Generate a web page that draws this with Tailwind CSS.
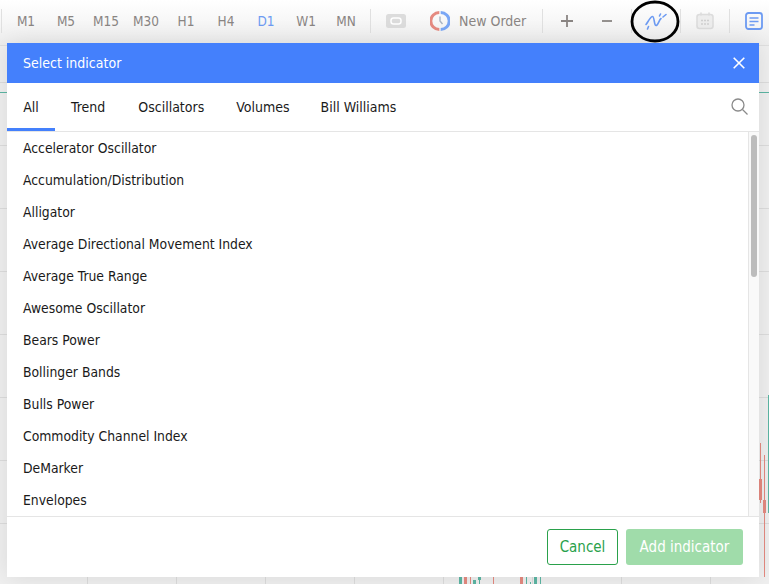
<!DOCTYPE html>
<html>
<head>
    <title>Select indicator</title>
    <script src="https://cdn.jsdelivr.net/npm/@tailwindcss/browser@4"></script>
</head>
<body class="w-[769px] h-[584px] overflow-hidden bg-[#f0f0f0] font-['DejaVu_Sans_Condensed','DejaVu_Sans',sans-serif]">
    <div class="relative w-[769px] h-[584px] overflow-hidden">
        <!-- toolbar -->
        <div class="h-[46px] flex items-start pt-[9px] border-b border-[#e0e0e0] bg-gradient-to-b from-white to-[#eeeeee] text-[14px] text-[#8a8583]">
            <div class="w-px h-6 ml-px bg-[#e0e0e0] mr-1"></div>
            <div class="flex w-[364px] h-6 items-center text-center text-[13.5px]">
                <span class="w-10">M1</span><span class="w-10">M5</span><span class="w-10">M15</span><span class="w-10">M30</span><span class="w-10">H1</span><span class="w-10">H4</span><span class="w-10 text-[#6d9bf2]">D1</span><span class="w-10">W1</span><span class="w-10">MN</span>
            </div>
            <div class="w-px h-6 bg-[#e0e0e0]"></div>
            <div class="w-[49px] h-6 flex items-center justify-center">
                <svg class="w-5 h-[14px]" viewBox="0 0 20 14"><rect width="20" height="14" rx="2.500" fill="#dcdcdc"/><rect x="5" y="4" width="10" height="6" rx="2.500" fill="none" stroke="#fff" stroke-width="1.500"/></svg>
            </div>
            <div class="h-6 flex items-center gap-[9px] w-[122px] pl-[10px]">
                <svg class="w-5 h-5 shrink-0" viewBox="0 0 20 20"><path d="M9.300 1.500a8.500 8.500 0 0 0 0 17" fill="none" stroke="#e58a80" stroke-width="3"/><path d="M10.700 1.500a8.500 8.500 0 0 1 0 17" fill="none" stroke="#7aa7f5" stroke-width="3"/><path d="M10 5.500v4.500l2.500 3" fill="none" stroke="#a9b4c2" stroke-width="1.400"/></svg>
                <span class="whitespace-nowrap">New Order</span>
            </div>
            <div class="w-px h-6 bg-[#e0e0e0]"></div>
            <div class="w-[48px] h-6 flex items-center justify-center">
                <svg class="w-3 h-3" viewBox="0 0 12 12"><path d="M6 0v12M0 6h12" stroke="#8a8583" stroke-width="1.800"/></svg>
            </div>
            <div class="w-[32px] h-6 flex items-center justify-center">
                <svg class="w-3 h-3" viewBox="0 0 12 12"><path d="M1 6h10" stroke="#8a8583" stroke-width="1.800"/></svg>
            </div>
            <div class="w-px h-6 ml-2 bg-[#e0e0e0]"></div>
            <div class="w-[47px] h-6 flex items-center justify-center mr-px">
                <svg class="w-[22px] h-[20px]" viewBox="0 0 22 20" fill="none" stroke="#6d9bf2" stroke-width="1.600" stroke-linecap="round"><path d="M1 13.500C3 11 5.500 5.500 7.500 5.500S9 14.500 11 14.500 14 9 16 7.500"/><path d="M2.500 18l1-2.500M14.500 5l1-2M18 6l3-2.500"/></svg>
            </div>
            <div class="w-px h-6 bg-[#e0e0e0]"></div>
            <div class="w-[48px] h-6 flex items-center justify-center">
                <svg class="w-[18px] h-[18px]" viewBox="0 0 18 18"><rect x="1" y="2.500" width="16" height="14" rx="2.500" fill="#ededed" stroke="#dcdcdc" stroke-width="1.600"/><path d="M5 0.500v3M13 0.500v3" stroke="#dcdcdc" stroke-width="1.600"/><path d="M5 8.500h2M8 8.500h2M11 8.500h2M5 12h2M8 12h2M11 12h2" stroke="#cfcfcf" stroke-width="1.300"/></svg>
            </div>
            <div class="w-px h-6 bg-[#e0e0e0]"></div>
            <div class="w-[39px] h-6 flex items-center pl-[15px]">
                <svg class="w-[18px] h-[18px] shrink-0" viewBox="0 0 18 18" fill="none" stroke="#6d9bf2"><rect x="1" y="1" width="16" height="16" rx="2.500" stroke-width="1.800"/><path d="M4.500 6h9M4.500 9.500h9M4.500 13h5" stroke-width="1.700"/></svg>
            </div>
        </div>

        <!-- dimmed chart behind the dialog -->
        <div class="relative h-[538px] bg-[image:linear-gradient(#dddddd_1px,transparent_1px),linear-gradient(90deg,#dcdcdc_1px,transparent_1px)] bg-[size:100%_63px,89px_100%] bg-[position:0_36px,87px_0]">
            <div class="absolute left-0 top-[46px] w-full h-px bg-[#5cb6a4]"></div>
            <div class="absolute left-[768px] top-[349px] w-px h-[118px] bg-[#5cb6a4]"></div>
            <div class="absolute left-[760px] top-[397px] w-px h-[60px] bg-[#e58a80]"></div>
            <div class="absolute left-[759px] top-[433px] w-[3px] h-[21px] bg-[#e58a80]"></div>
            <div class="absolute left-[764px] top-[409px] w-px h-[122px] bg-[#e58a80]"></div>
            <div class="absolute left-[763px] top-[454px] w-[3px] h-[13px] bg-[#e58a80]"></div>
            <div class="absolute left-[459px] top-[531px] w-[3px] h-[7px] bg-[#5cb6a4]"></div>
            <div class="absolute left-[464px] top-[531px] w-[3px] h-[7px] bg-[#e58a80]"></div>
            <div class="absolute left-[470px] top-[531px] w-px h-[7px] bg-[#e58a80]"></div>
            <div class="absolute left-[473px] top-[534px] w-[3px] h-1 bg-[#5cb6a4]"></div>
            <div class="absolute left-[478px] top-[531px] w-[3px] h-[3px] bg-[#5cb6a4]"></div>
            <div class="absolute left-[479px] top-[531px] w-px h-[7px] bg-[#5cb6a4]"></div>
            <div class="absolute left-[493px] top-[531px] w-px h-[7px] bg-[#e58a80]"></div>
            <div class="absolute left-[520px] top-[531px] w-[3px] h-[7px] bg-[#e58a80]"></div>
            <div class="absolute left-[526px] top-[531px] w-px h-[7px] bg-[#5cb6a4]"></div>
            <div class="absolute left-[530px] top-[536px] w-px h-[2px] bg-[#5cb6a4]"></div>
            <div class="absolute left-[534px] top-[531px] w-[3px] h-[7px] bg-[#5cb6a4]"></div>
            <div class="absolute left-[540px] top-[531px] w-px h-[7px] bg-[#5cb6a4]"></div>
        </div>

        <!-- dialog -->
        <div class="absolute left-[7px] top-[43px] w-[752px] h-[534px] bg-white flex flex-col shadow-[0_0_24px_rgba(0,0,0,0.1)]">
            <div class="h-10 bg-[#4480fc] text-white text-[14px] flex items-center justify-between pl-4 pr-[14px]">
                <span>Select indicator</span>
                <svg class="w-[12px] h-[12px]" viewBox="0 0 12 12"><path d="M.7.7l10.600 10.600M11.300.7L.7 11.300" stroke="#fff" stroke-width="1.600"/></svg>
            </div>
            <div class="h-[49px] border-b border-[#e5e5e5] flex items-stretch text-[14px] text-[#1a1a1a] relative">
                <div class="w-12 flex items-center justify-center border-b-[3px] pt-[3px] border-[#4480fc] h-[48px]">All</div>
                <div class="pl-4 pr-[17px] flex items-center">Trend</div>
                <div class="px-4 flex items-center">Oscillators</div>
                <div class="pl-4 pr-[15px] flex items-center">Volumes</div>
                <div class="px-4 flex items-center">Bill Williams</div>
                <svg class="absolute right-[11px] top-[15px] w-[17px] h-[17px]" viewBox="0 0 17 17" fill="none" stroke="#8a8a8a" stroke-width="1.300"><circle cx="7" cy="7" r="6"/><path d="M11.500 11.500l5 5"/></svg>
            </div>
            <div class="h-[384px] flex overflow-hidden border-b border-[#e5e5e5] box-content">
                <ul class="flex-1 text-[13.8px] text-[#1a1a1a] pl-4 border-r border-[#e5e5e5]">
                    <li class="h-8 flex items-center">Accelerator Oscillator</li>
                    <li class="h-8 flex items-center">Accumulation/Distribution</li>
                    <li class="h-8 flex items-center">Alligator</li>
                    <li class="h-8 flex items-center">Average Directional Movement Index</li>
                    <li class="h-8 flex items-center">Average True Range</li>
                    <li class="h-8 flex items-center">Awesome Oscillator</li>
                    <li class="h-8 flex items-center">Bears Power</li>
                    <li class="h-8 flex items-center">Bollinger Bands</li>
                    <li class="h-8 flex items-center">Bulls Power</li>
                    <li class="h-8 flex items-center">Commodity Channel Index</li>
                    <li class="h-8 flex items-center">DeMarker</li>
                    <li class="h-8 flex items-center">Envelopes</li>
                </ul>
                <div class="w-[10px] pt-[3px] pl-[2px] bg-[#f9f9f9]">
                    <div class="w-[6px] h-[142px] rounded-full bg-[#bcbcbc]"></div>
                </div>
            </div>
            <div class="flex-1 flex items-center justify-end gap-2 pr-4 text-[15px]">
                <button class="w-[71px] h-9 pt-px rounded-[3px] border border-[#2aa14b] text-[#2aa14b] bg-white">Cancel</button>
                <button class="w-[117px] h-9 pt-px rounded-[3px] bg-[#a0dcaa] text-white">Add indicator</button>
            </div>
        </div>

        <!-- hand drawn circle round the indicators button -->
        <svg class="absolute left-[630px] top-0 w-[50px] h-[44px]" viewBox="0 0 50 44" fill="none"><ellipse cx="25" cy="21.500" rx="23" ry="19.500" stroke="#000" stroke-width="2.800"/></svg>
    </div>
</body>
</html>
